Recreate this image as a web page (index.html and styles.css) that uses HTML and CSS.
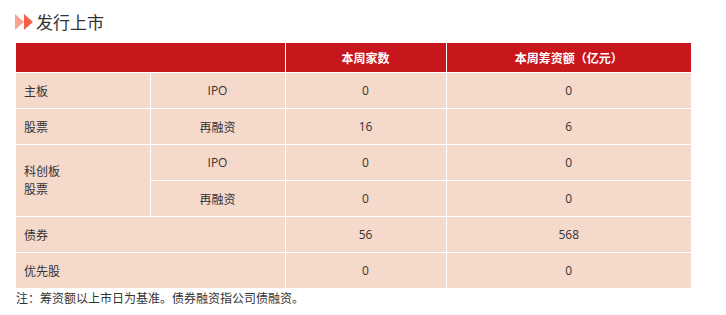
FILE: index.html
```html
<!DOCTYPE html>
<html lang="zh-CN">
<head>
<meta charset="utf-8">
<link rel="stylesheet" href="styles.css">
</head>
<body>
<div class="page">
  <h2 class="title">
    <svg class="arrows" width="18" height="16" viewBox="0 0 18 16"><polygon points="0,0 9,8 0,16" fill="#f9a394"/><polygon points="9,0 18,8 9,16" fill="#f4604a"/></svg>
    <span>发行上市</span>
  </h2>
  <table class="data">
    <colgroup>
      <col class="c1"><col class="c2"><col class="c3"><col class="c4">
    </colgroup>
    <thead>
      <tr><th colspan="2"></th><th>本周家数</th><th>本周筹资额（亿元）</th></tr>
    </thead>
    <tbody>
      <tr><td class="lbl">主板</td><td>IPO</td><td>0</td><td>0</td></tr>
      <tr><td class="lbl">股票</td><td>再融资</td><td>16</td><td>6</td></tr>
      <tr><td class="lbl multi" rowspan="2">科创板<br>股票</td><td>IPO</td><td>0</td><td>0</td></tr>
      <tr><td>再融资</td><td>0</td><td>0</td></tr>
      <tr><td class="lbl" colspan="2">债券</td><td>56</td><td>568</td></tr>
      <tr><td class="lbl" colspan="2">优先股</td><td>0</td><td>0</td></tr>
    </tbody>
  </table>
  <p class="note">注：筹资额以上市日为基准。债券融资指公司债融资。</p>
</div>
</body>
</html>
```
FILE: styles.css
```css
html, body {
  margin: 0;
  padding: 0;
  background: #fff;
}
body {
  font-family: "Open Sans", "Noto Sans CJK SC", sans-serif;
  color: #333;
}
.page {
  padding: 0 35px 0 16px;
}
.title {
  margin: 0;
  height: 43px;
  display: flex;
  align-items: center;
  gap: 3px;
  margin-left: -1px;
  font-size: 17px;
  font-weight: normal;
  color: #333;
  padding-bottom: 1px;
  box-sizing: border-box;
}
.arrows {
  display: block;
  margin-top: 1px;
}
.data {
  width: 675px;
  border-collapse: collapse;
  table-layout: fixed;
  font-size: 12px;
}
.c1 { width: 134px; }
.c2 { width: 135px; }
.c3 { width: 161px; }
.c4 { width: 245px; }
.data th,
.data td {
  border: 1px solid #fff;
  text-align: center;
  padding: 0;
}
.data tr:first-child th { border-top: none; }
.data th:first-child, .data td.lbl { border-left: none; }
.data th:last-child, .data td:last-child { border-right: none; }
.data tbody tr:last-child td { border-bottom: none; }
.data th {
  background: #c8161d;
  color: #fff;
  height: 29px;
  font-weight: bold;
  font-size: 12px;
}
.data td {
  background: #f5d9cb;
  height: 35px;
  color: #333;
}
.data td.lbl {
  text-align: left;
  padding-left: 8px;
}
.data td.multi {
  line-height: 18px;
}
.note {
  margin: 2px 0 0 0;
  font-size: 12px;
  line-height: 18px;
  color: #333;
}
```
